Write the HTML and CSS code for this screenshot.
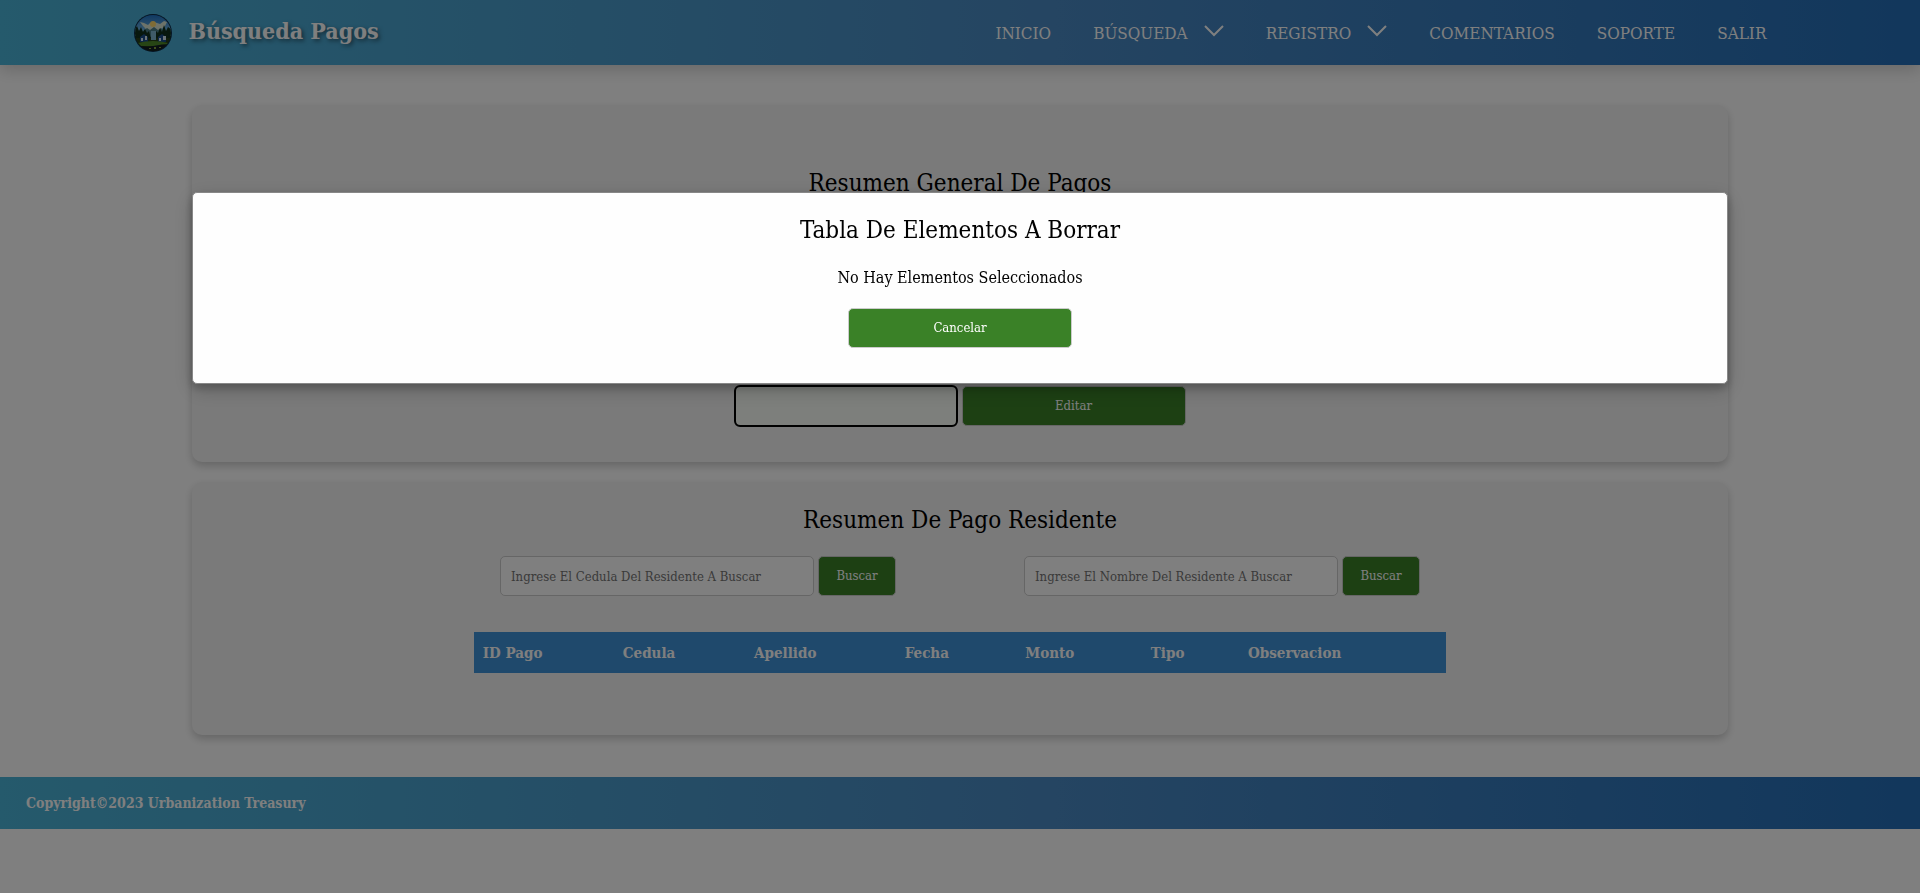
FILE: index.html
```html
<!DOCTYPE html>
<html lang="es">
<head>
<meta charset="utf-8">
<meta name="viewport" content="width=device-width, initial-scale=1">
<title>Búsqueda Pagos</title>
<link rel="stylesheet" href="styles.css">
</head>
<body>
<header class="topbar">
  <a class="brand" href="#">
    <svg class="brand-logo" viewBox="0 0 38 38" aria-hidden="true">
      <defs>
        <clipPath id="disc"><circle cx="19" cy="19" r="18"/></clipPath>
        <linearGradient id="sky" x1="0" y1="0" x2="0" y2="1">
          <stop offset="0" stop-color="#1a6fc4"/><stop offset="1" stop-color="#8cc8e6"/>
        </linearGradient>
      </defs>
      <circle cx="19" cy="19" r="19" fill="#0b2a48"/>
      <g clip-path="url(#disc)">
        <rect width="38" height="22" fill="url(#sky)"/>
        <path d="M6 8l4 1 4 2 2-2 3-1 4 1 3 1 4-3 3 1-2 4-5 4H13l-4-4z" fill="#dbe6d4"/>
        <circle cx="19" cy="10" r="3" fill="#ffd96c"/>
        <path d="M8 18l5-4 3 2 4-3 4 3 3-2 5 5v4H7z" fill="#4d808a"/>
        <path d="M0 25l1-10 2-3 2 5 2-4 2 5 2-3 2 4 2-2 2 8zM21 25l1-8 2 2 2-5 2 4 2-7 2 6 2-4 4 3v9z" fill="#10301c"/>
        <rect y="24" width="38" height="14" fill="#243f18"/>
        <path d="M17 17h5v9h-5z" fill="#7fb6d0"/>
        <path d="M6 23l4-3 4 3v5H6zM24 23l4-3 4 3v5h-8z" fill="#1b4c8a"/>
        <path d="M7 24h2v3H7zM11 22h2v4h-2zM25 24h2v3h-2zM29 22h3v4h-3z" fill="#d5e8f2"/>
        <path d="M4 29q15-4 30 0l-3 3H7z" fill="#4f8a2b"/>
        <path d="M1 30q9 4 18 2t18-2v8H1z" fill="#101c20"/>
        <path d="M15 34h2v1h-2zM20 33h2v2h-2zM25 33h2v1h-2z" fill="#81a03a"/>
      </g>
    </svg>
    <span class="brand-name">Búsqueda Pagos</span>
  </a>
  <nav class="menu" aria-label="Principal">
    <a class="menu-link" href="#">INICIO</a>
    <a class="menu-link" href="#">BÚSQUEDA<svg class="chevron" viewBox="0 0 20 16" aria-hidden="true"><path d="M1 1l9 9 9-9"/></svg></a>
    <a class="menu-link" href="#">REGISTRO<svg class="chevron" viewBox="0 0 20 16" aria-hidden="true"><path d="M1 1l9 9 9-9"/></svg></a>
    <a class="menu-link" href="#">COMENTARIOS</a>
    <a class="menu-link" href="#">SOPORTE</a>
    <a class="menu-link" href="#">SALIR</a>
  </nav>
</header>

<main class="content">
  <section class="card card-general">
    <h2 class="title">Resumen General De Pagos</h2>
    <form class="actions">
      <input class="field field-active" type="text" aria-label="Pago a editar">
      <button class="btn btn-wide" type="button">Editar</button>
    </form>
  </section>

  <section class="card card-resident">
    <h2 class="title">Resumen De Pago Residente</h2>
    <div class="searches">
      <form class="search">
        <input class="field" type="text" aria-label="Cedula del residente" placeholder="Ingrese El Cedula Del Residente A Buscar">
        <button class="btn" type="button">Buscar</button>
      </form>
      <form class="search">
        <input class="field" type="text" aria-label="Nombre del residente" placeholder="Ingrese El Nombre Del Residente A Buscar">
        <button class="btn" type="button">Buscar</button>
      </form>
    </div>
    <table class="payments">
      <colgroup><col class="col-id"><col class="col-cedula"><col class="col-apellido"><col class="col-fecha"><col class="col-monto"><col class="col-tipo"><col></colgroup>
      <thead>
        <tr><th>ID Pago</th><th>Cedula</th><th>Apellido</th><th>Fecha</th><th>Monto</th><th>Tipo</th><th>Observacion</th></tr>
      </thead>
    </table>
  </section>
</main>

<footer class="footer">Copyright©2023 Urbanization Treasury</footer>

<div class="overlay">
  <div class="modal" role="dialog" aria-modal="true" aria-labelledby="modal-title">
    <h2 class="title" id="modal-title">Tabla De Elementos A Borrar</h2>
    <p class="modal-text">No Hay Elementos Seleccionados</p>
    <button class="btn btn-wide" type="button">Cancelar</button>
  </div>
</div>
</body>
</html>
```
FILE: styles.css
```css
:root {
  --bar: linear-gradient(90deg, #4ab4d8, #4a8ac4 55%, #246eb8);
  --green: #3a8127;
  --slab: "Roboto Slab", "DejaVu Serif Condensed", "DejaVu Serif", serif;
}

* { box-sizing: border-box; }

body {
  margin: 0;
  background: #fff;
  color: #000;
  font-family: var(--slab);
  font-size: 16px;
}

.topbar {
  display: flex;
  align-items: center;
  justify-content: space-between;
  height: 65px;
  padding: 0 8% 0 7%;
  background: var(--bar);
  box-shadow: 0 4px 16px rgba(0, 0, 0, .2);
}

.brand {
  display: flex;
  align-items: center;
  gap: 16px;
  color: #fff;
  text-decoration: none;
}

.brand-logo { width: 38px; height: 38px; }

.brand-name {
  font-size: 23px;
  font-weight: 700;
  line-height: 32px;
  padding-bottom: 4px;
  text-shadow: 2px 2px 4px rgba(0, 0, 0, .5);
}

.menu { display: flex; gap: 42px; }

.menu-link {
  display: flex;
  align-items: center;
  gap: 16px;
  color: #fff;
  font-size: 17px;
  font-weight: 300;
  text-decoration: none;
}

.chevron {
  width: 20px;
  height: 16px;
  fill: none;
  stroke: #fff;
  stroke-width: 2;
}

.content {
  display: flex;
  flex-direction: column;
  gap: 20px;
  width: 80%;
  margin: 40px auto 42px;
}

.card {
  border-radius: 10px;
  background: #f4f4f4;
  box-shadow: 0 4px 8px rgba(0, 0, 0, .2);
}

.card-general { padding: 60px 20px 36px; }
.card-resident { padding: 20px 20px 62px; }

.title {
  margin: 0;
  font-size: 24px;
  font-weight: 400;
  line-height: 36px;
  text-align: center;
}

.actions {
  display: flex;
  justify-content: center;
  gap: 5px;
  padding-top: 185px;
}

.field {
  width: 314px;
  height: 40px;
  padding: 0 10px;
  border: 1px solid #ccc;
  border-radius: 5px;
  background: #fff;
  font: 300 13px/20px var(--slab);
}

.field::placeholder { color: #757575; }

.field-active {
  width: 222px;
  background: #fafff8;
  outline: 2px solid #000;
  outline-offset: -1px;
}

.btn {
  min-width: 78px;
  height: 40px;
  padding: 0 16px;
  border: 1px solid #ccc;
  border-radius: 5px;
  background: var(--green);
  color: #fff;
  font: 300 13px/20px var(--slab);
}

.btn-wide { width: 224px; }

.searches {
  display: flex;
  justify-content: center;
  gap: 128px;
  padding: 18px 0 36px;
}

.search { display: flex; gap: 4px; }

.payments {
  width: 65%;
  margin: 0 auto;
  border-collapse: collapse;
  table-layout: fixed;
  background: #3e92d8;
  color: #fff;
}

.col-id { width: 14.4%; }
.col-cedula { width: 13.5%; }
.col-apellido { width: 15.5%; }
.col-fecha { width: 12.4%; }
.col-monto { width: 12.9%; }
.col-tipo { width: 10%; }

.payments th {
  height: 41px;
  padding: 0 9px;
  font-size: 15px;
  font-weight: 700;
  text-align: left;
}

.footer {
  padding: 16px 26px;
  background: var(--bar);
  color: #fff;
  font-size: 14px;
  font-weight: 700;
  line-height: 20px;
}

.overlay {
  position: fixed;
  inset: 0;
  padding-top: 192px;
  background: rgba(0, 0, 0, .5);
}

.modal {
  width: 80%;
  margin: 0 auto;
  padding: 19px 20px 35px;
  border: 1px solid #888;
  border-radius: 5px;
  background: #fefefe;
  box-shadow: 0 4px 8px rgba(0, 0, 0, .2), 0 6px 20px rgba(0, 0, 0, .19);
  text-align: center;
}

.modal-text {
  margin: 18px 0;
  font-weight: 300;
  line-height: 24px;
}
```
